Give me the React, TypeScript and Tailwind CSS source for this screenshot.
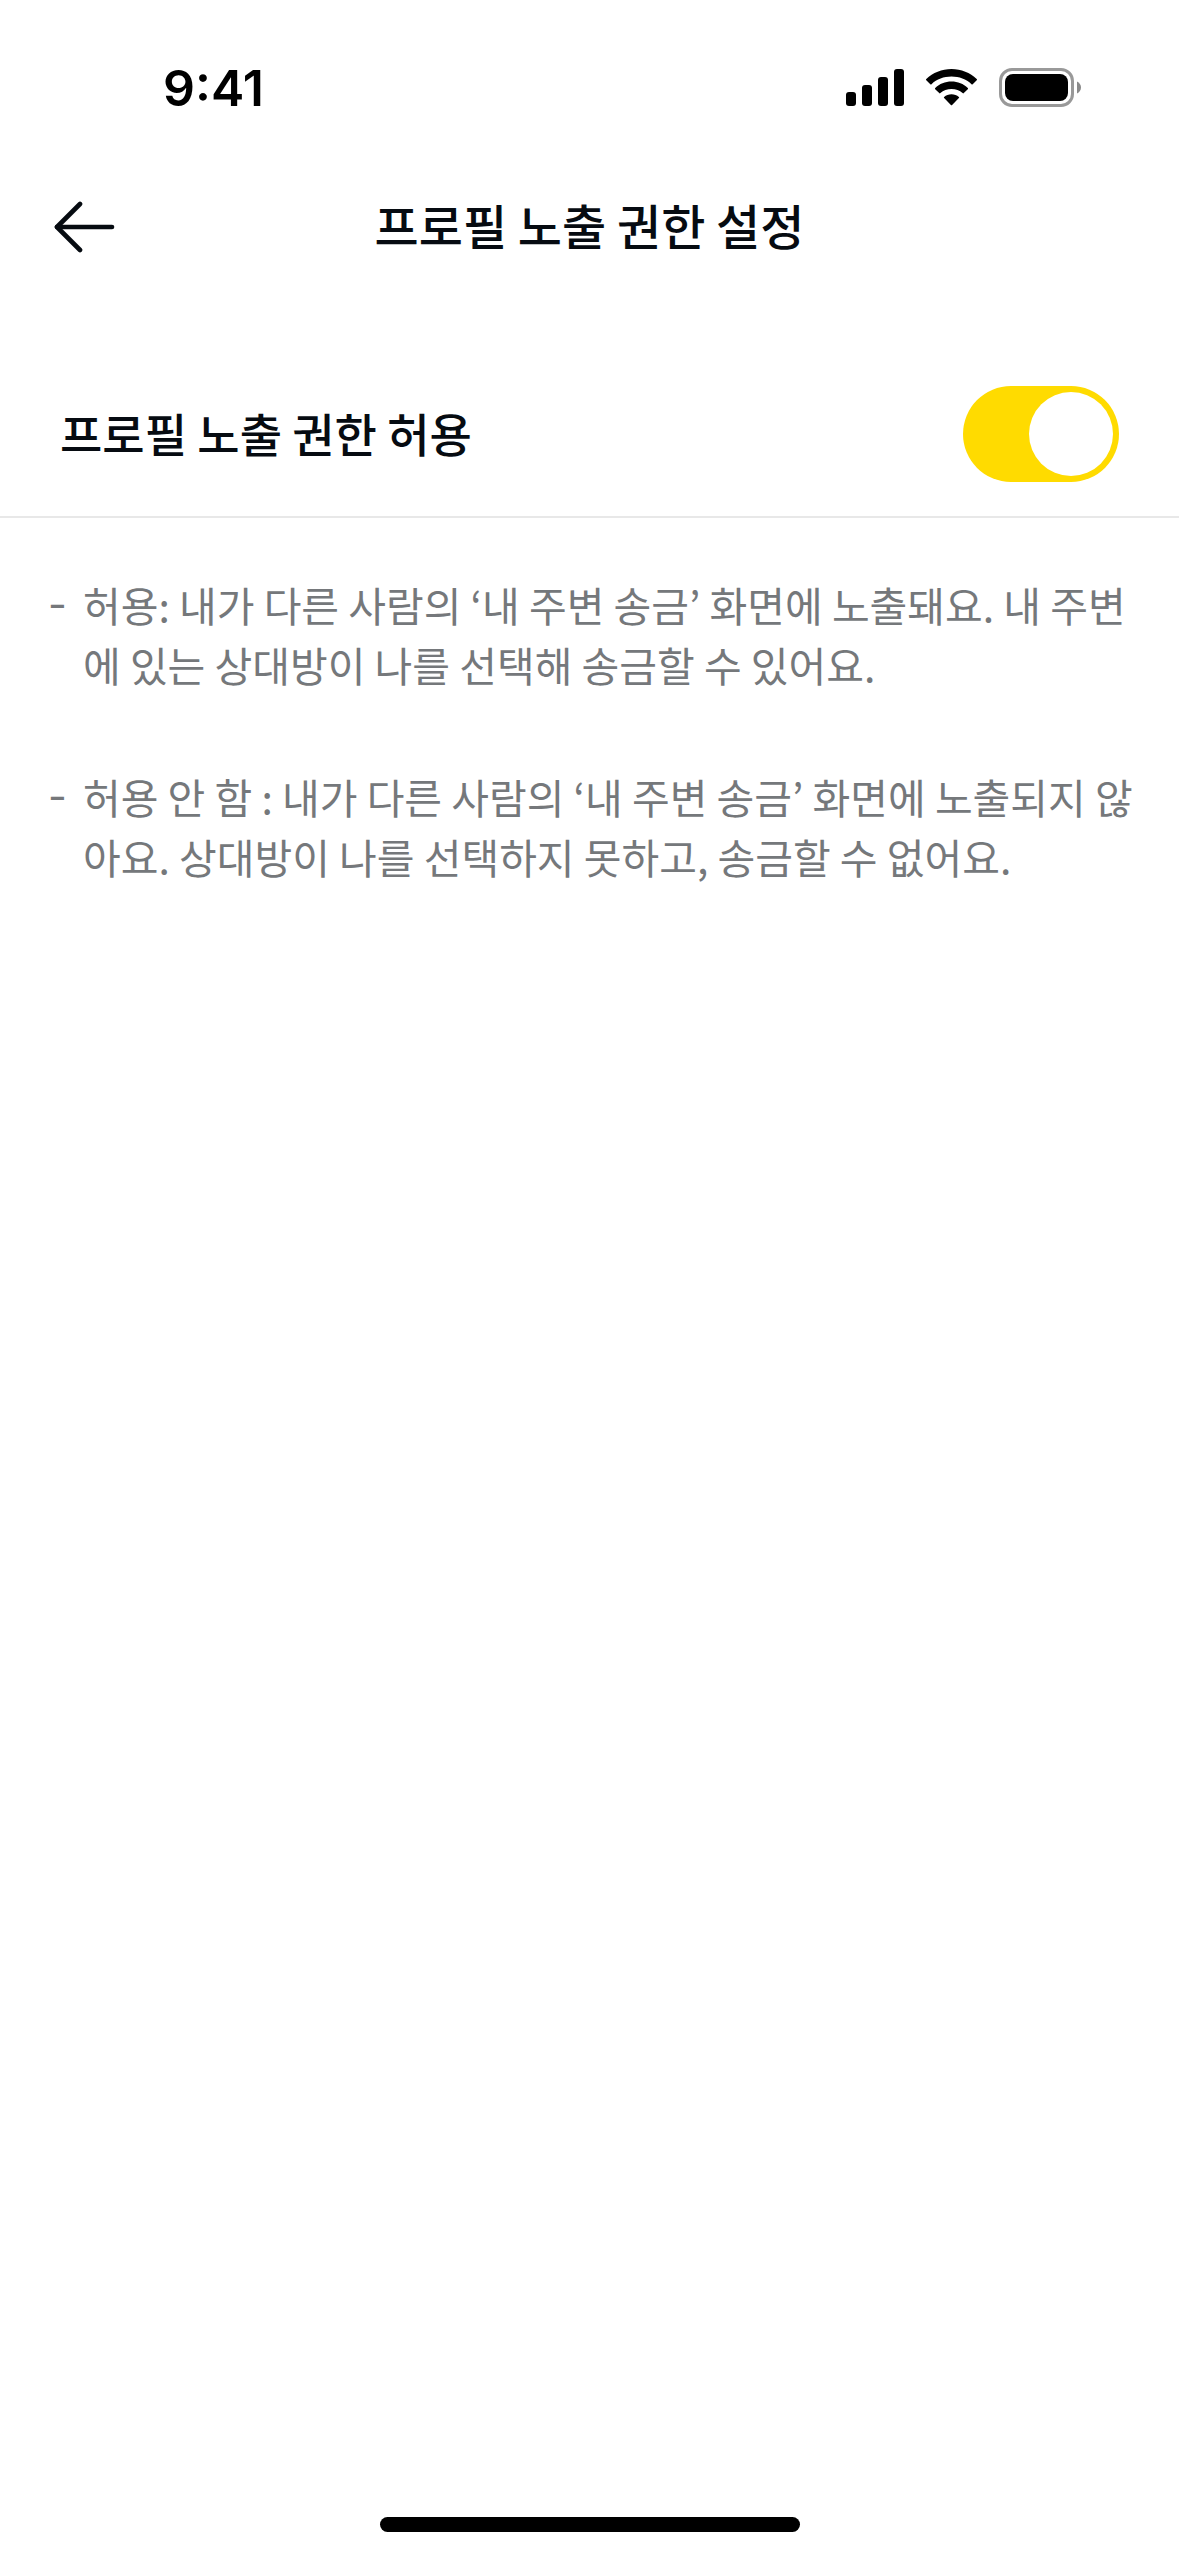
import React, { useState } from 'react';

const notes = [
    '허용: 내가 다른 사람의 ‘내 주변 송금’ 화면에 노출돼요. 내 주변에 있는 상대방이 나를 선택해 송금할 수 있어요.',
    '허용 안 함 : 내가 다른 사람의 ‘내 주변 송금’ 화면에 노출되지 않아요. 상대방이 나를 선택하지 못하고, 송금할 수 없어요.',
];

const SignalIcon: React.FC = () => (
    <svg width="58" height="40" viewBox="0 0 58 40" aria-hidden="true">
        <rect x="0" y="24" width="10" height="14" rx="3" />
        <rect x="16" y="17" width="10" height="21" rx="3" />
        <rect x="32" y="9" width="10" height="29" rx="3" />
        <rect x="48" y="1" width="10" height="37" rx="3" />
    </svg>
);

const WifiIcon: React.FC = () => (
    <svg width="51" height="40" viewBox="0 0 51 40" aria-hidden="true">
        <path d="M25.5 1C35.2 1 44.1 4.7 50.7 11.1Q51.3 11.7 50.7 12.3L46.7 16.2Q46.1 16.8 45.5 16.2C40.2 11.3 33.2 8.6 25.5 8.6S10.8 11.3 5.5 16.2Q4.9 16.8 4.3 16.2L.3 12.3Q-.3 11.7 .3 11.1C6.9 4.7 15.8 1 25.5 1Z" />
        <path d="M25.5 13.6C31.8 13.6 37.5 16 41.8 20Q42.4 20.6 41.8 21.2L37.8 25.1Q37.2 25.7 36.6 25.1C33.6 22.6 29.8 21.1 25.5 21.1S17.4 22.6 14.4 25.1Q13.8 25.7 13.2 25.1L9.2 21.2Q8.6 20.6 9.2 20C13.5 16 19.2 13.6 25.5 13.6Z" />
        <path d="M25.5 26.2C28.3 26.2 30.9 27.2 32.9 28.9Q33.5 29.5 32.9 30.1L26.1 36.9Q25.5 37.5 24.9 36.9L18.1 30.1Q17.5 29.5 18.1 28.9C20.1 27.2 22.7 26.2 25.5 26.2Z" />
    </svg>
);

const BatteryIcon: React.FC = () => (
    <svg width="82" height="40" viewBox="0 0 82 40" aria-hidden="true">
        <rect x="1.5" y="1.5" width="72" height="36" rx="11.5" fill="none" stroke="#999999" strokeWidth="3" />
        <rect x="6" y="6" width="63" height="27" rx="8" />
        <path d="M78 13.5V25.5C80.4 24.5 82 22.1 82 19.5S80.4 14.5 78 13.5Z" fill="#8a8a8a" />
    </svg>
);

const StatusBar: React.FC = () => (
    <div className="flex h-44 items-center justify-between pl-[163px] pr-[98px]">
        <span className="font-[Inter,sans-serif] text-[50px] font-semibold leading-none text-black">9:41</span>
        <div className="flex items-center gap-[22px]">
            <SignalIcon />
            <WifiIcon />
            <BatteryIcon />
        </div>
    </div>
);

export default function App() {
    const [allowed, setAllowed] = useState<boolean>(true);

    return (
        <div className="flex min-h-screen flex-col bg-white font-['Noto_Sans_CJK_KR',sans-serif] text-[#060b11]">
            <StatusBar />

            <header className="grid h-[100px] grid-cols-[1fr_auto_1fr] items-center px-[54px]">
                <button type="button" aria-label="뒤로" className="justify-self-start">
                    <svg width="62" height="54" viewBox="0 0 62 54" fill="none" stroke="currentColor" strokeWidth="4.6" strokeLinecap="round" strokeLinejoin="round">
                        <path d="M26 5L3 28L26 51" />
                        <path d="M3 28H58" />
                    </svg>
                </button>
                <h1 className="pb-1 text-[48px] font-medium leading-[60px]">프로필 노출 권한 설정</h1>
            </header>

            <main className="flex-1">
                <div className="mt-[76px] flex h-[166px] items-center justify-between border-b-2 border-[#e8e8e8] px-[60px]">
                    <label htmlFor="profile-allow" className="pb-1 text-[46px] font-medium leading-[60px]">
                        프로필 노출 권한 허용
                    </label>
                    <input
                        id="profile-allow"
                        type="checkbox"
                        role="switch"
                        checked={allowed}
                        onChange={(e) => setAllowed(e.target.checked)}
                        className="flex h-24 w-[156px] cursor-pointer appearance-none items-center rounded-full bg-[#d5d8dc] p-1.5 before:size-[84px] before:rounded-full before:bg-white checked:justify-end checked:bg-[#ffdb00]"
                    />
                </div>

                <ul className="mt-14 flex flex-col gap-[72px] pl-[48px] pr-10 text-[41px] leading-[60px] text-[#75787b]">
                    {notes.map((note) => (
                        <li key={note} className="flex">
                            <span className="w-[35px] shrink-0 font-[Inter,sans-serif]">-</span>
                            <p>{note}</p>
                        </li>
                    ))}
                </ul>
            </main>

            <footer className="flex justify-center pb-6">
                <div className="h-[15px] w-[420px] rounded-full bg-black" />
            </footer>
        </div>
    );
}
